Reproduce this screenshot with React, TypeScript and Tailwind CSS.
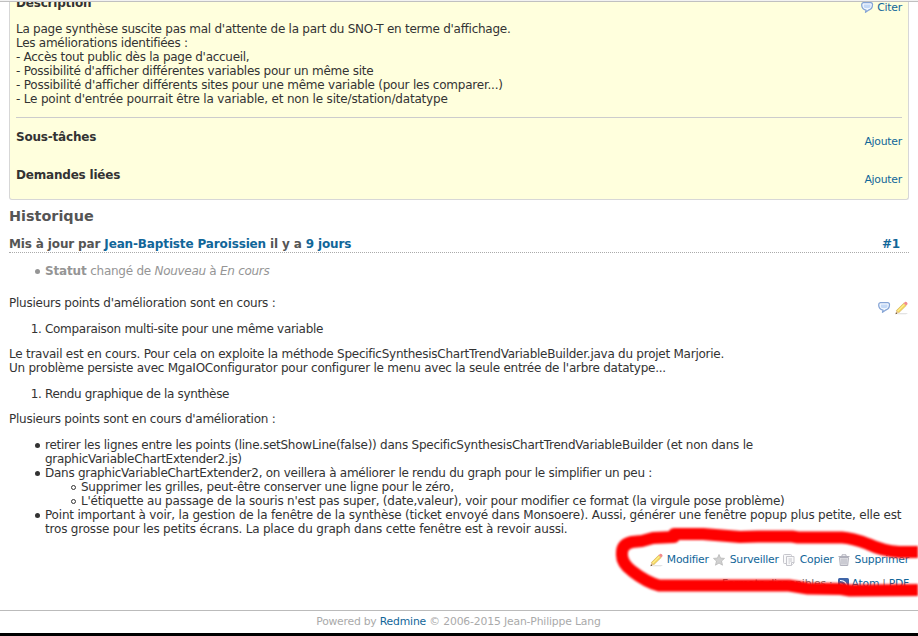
import React from "react";

function Bubble() {
  return (
    <svg width="16" height="16" viewBox="0 0 16 16" className="shrink-0">
      <path d="M4.300 2.600h7.700q1.700.4 1.500 2.200-.1 4.400-3.700 5.200L6.500 12.300l.5-2.200Q2.800 9.200 2.700 5 2.600 2.900 4.300 2.600z" fill="#f4f9ff" stroke="#86a5d6" strokeWidth="1.300" strokeLinejoin="round" />
      <path d="M4.800 4.600h6.700v3q-3.500 1.400-6.700 0z" fill="#c4d9f6" />
    </svg>
  );
}

function Pencil() {
  return (
    <svg width="16" height="16" viewBox="0 0 16 16" className="shrink-0">
      <path d="M4 14.200h9l2-.9H7z" fill="#dadada" />
      <path d="M3.300 10.600L10.700 3.200l2.500 2.300-7.500 7.300z" fill="#f7dc62" stroke="#cda648" strokeWidth=".6" />
      <path d="M4.500 11.200L11.300 4.400" stroke="#fff2a6" strokeWidth="1" />
      <path d="M10.700 3.200l1.500-1.400q2-.2 2.500 2.200l-1.500 1.500z" fill="#f28b8d" />
      <path d="M2.700 14l.6-3.400 2.400 2.200z" fill="#e6c79c" />
      <path d="M2.500 14.200l.5-2 1.500 1.300z" fill="#6b5335" />
    </svg>
  );
}

function Star() {
  return (
    <svg width="16" height="16" viewBox="0 0 16 16" className="shrink-0">
      <path d="M8 2.500l1.500 3.600 4 .3-3 2.600 1 4.200-3.500-2.200-3.500 2.200 1-4.200-3-2.600 4-.3z" fill="#d0d0d0" stroke="#bcbcbc" strokeWidth=".9" />
    </svg>
  );
}

function Copy() {
  return (
    <svg width="16" height="16" viewBox="0 0 16 16" className="shrink-0" fill="#f9f9fa" stroke="#c6c6cc" strokeWidth="1">
      <rect x="2.500" y="2.500" width="8" height="9" rx="1" />
      <path d="M5.500 4.500h7.500v6.500l-2.500 2.500h-5z" />
      <path d="M7.500 7h3.500M7.500 9h3.500M7.500 11h1.500M10.500 13.500v-3H13" />
    </svg>
  );
}

function Trash() {
  return (
    <svg width="16" height="16" viewBox="0 0 16 16" className="shrink-0" fill="none" stroke="#b0b0bb">
      <path d="M3.500 5.500h9l-.8 8H4.300z" fill="#e6e6ea" />
      <path d="M2.500 4.500h11M6 4V2.800h4V4M6 6.500v6M8 6.500v6M10 6.500v6" />
    </svg>
  );
}

function Feed() {
  return (
    <svg width="11" height="12" viewBox="0 0 11 12" className="shrink-0">
      <rect width="11" height="12" rx="1.500" fill="#3f65a8" />
      <path d="M2 2.500q7 0 7 7.500M2 6q3.500 0 3.500 4" fill="none" stroke="#fff" strokeWidth="1.200" />
    </svg>
  );
}

function Item({ hollow, children }: { hollow?: boolean; children: React.ReactNode }) {
  return (
    <li className="-ml-[10px] flex">
      <span className={`mt-[5px] shrink-0 rounded-full ${hollow ? "mr-[5px] h-[5px] w-[5px] border border-current" : "mr-[5.500px] h-[4.500px] w-[4.500px] bg-current"}`} />
      <div>{children}</div>
    </li>
  );
}

const link = "text-[#169]";
const small = "text-[10.8px] leading-[14px] tracking-[-0.22px]";

export default function App() {
  return (
    <div className="relative h-[636px] w-[918px] overflow-hidden bg-white font-['DejaVu_Sans',sans-serif] text-[12px] leading-[14px] tracking-[-0.245px] whitespace-nowrap text-[#333]">
      <div className="h-[2px] border-b border-[#c0c0c0] bg-[#f2f2f2]" />
      <section className="mx-[9px] h-[198px] overflow-hidden rounded-b-[3px] border border-t-0 border-[#d7d7d7] bg-[#ffffdd] px-[6px]">
        <div className="flex h-[20px] justify-between">
          <b className="-mt-[6px] block tracking-[-0.2px]">Description</b>
          <span className={`-mt-[2px] flex h-[16px] items-center ${small} ${link}`}>
            <Bubble />
            <a className="ml-[2px]">Citer</a>
          </span>
        </div>
        <p>
          <span className="tracking-[-0.255px]">La page synthèse suscite pas mal d'attente de la part du SNO-T en terme d'affichage.</span><br />
          <span className="tracking-[-0.27px]">Les améliorations identifiées :</span><br />
          <span className="tracking-[-0.28px]">- Accès tout public dès la page d'accueil,</span><br />
          - Possibilité d'afficher différentes variables pour un même site<br />
          <span className="tracking-[-0.225px]">- Possibilité d'afficher différents sites pour une même variable (pour les comparer...)</span><br />
          <span className="tracking-[-0.18px]">- Le point d'entrée pourrait être la variable, et non le site/station/datatype</span>
        </p>
        <hr className="mt-[11px] border-[#cccccc]" />
        <div className="mt-[12px] flex h-[38px] justify-between">
          <b className="tracking-[-0.2px]">Sous-tâches</b>
          <a className={`mt-[5px] ${small} ${link}`}>Ajouter</a>
        </div>
        <div className="flex justify-between">
          <b className="tracking-[-0.2px]">Demandes liées</b>
          <a className={`mt-[5px] ${small} ${link}`}>Ajouter</a>
        </div>
      </section>
      <main className="px-[9px]">
        <h3 className="mt-[8px] text-[14.4px] leading-[16px] font-bold tracking-normal text-[#555]">Historique</h3>
        <h4 className="mt-[12px] flex h-[17px] justify-between border-b border-dotted border-[#aaa] pr-[9px] leading-[16px] font-bold tracking-[-0.14px] text-[#555]">
          <span>Mis à jour par <a className={link}>Jean-Baptiste Paroissien</a> il y a <a className={link}>9 jours</a></span>
          <a className={link}>#1</a>
        </h4>
        <ul className="mt-[11px] pl-[36px] text-[#959595]">
          <Item><b className="tracking-[-0.15px]">Statut</b> changé de <i className="tracking-[-0.3px]">Nouveau</i> à <i className="tracking-[-0.3px]">En cours</i></Item>
        </ul>
        <div className="mt-[18px] flex h-[26px] justify-between">
          <p>Plusieurs points d'amélioration sont en cours :</p>
          <span className="mt-[4px] flex gap-[1px]"><Bubble /><Pencil /></span>
        </div>
        <ol className="list-decimal pl-[36px] tracking-[-0.3px]"><li>Comparaison multi-site pour une même variable</li></ol>
        <p className="mt-[11px]">
          <span className="tracking-[-0.25px]">Le travail est en cours. Pour cela on exploite la méthode SpecificSynthesisChartTrendVariableBuilder.java du projet Marjorie.</span><br />
          <span className="tracking-[-0.24px]">Un problème persiste avec MgaIOConfigurator pour configurer le menu avec la seule entrée de l'arbre datatype...</span>
        </p>
        <ol className="mt-[12px] list-decimal pl-[36px] tracking-[-0.34px]"><li>Rendu graphique de la synthèse</li></ol>
        <p className="mt-[11px]">Plusieurs points sont en cours d'amélioration :</p>
        <ul className="mt-[12px] pl-[36px]">
          <Item>retirer les lignes entre les points (line.setShowLine(false)) dans SpecificSynthesisChartTrendVariableBuilder (et non dans le<br /><span className="tracking-[-0.3px]">graphicVariableChartExtender2.js)</span></Item>
          <Item>
            <span className="tracking-[-0.27px]">Dans graphicVariableChartExtender2, on veillera à améliorer le rendu du graph pour le simplifier un peu :</span>
            <ul className="pl-[36px]">
              <Item hollow>Supprimer les grilles, peut-être conserver une ligne pour le zéro,</Item>
              <Item hollow><span className="tracking-[-0.218px]">L'étiquette au passage de la souris n'est pas super, (date,valeur), voir pour modifier ce format (la virgule pose problème)</span></Item>
            </ul>
          </Item>
          <Item><span className="tracking-[-0.197px]">Point important à voir, la gestion de la fenêtre de la synthèse (ticket envoyé dans Monsoere). Aussi, générer une fenêtre popup plus petite, elle est<br />tros grosse pour les petits écrans. La place du graph dans cette fenêtre est à revoir aussi.</span></Item>
        </ul>
        <div className={`mt-[16px] flex h-[16px] items-center justify-end gap-[2px] ${small} ${link}`}>
          <span className="flex items-center gap-[3px]"><Pencil /><a>Modifier</a></span>
          <span className="flex items-center gap-[3px]"><Star /><a>Surveiller</a></span>
          <span className="flex items-center gap-[3px]"><Copy /><a>Copier</a></span>
          <span className="flex items-center gap-[3px]"><Trash /><a>Supprimer</a></span>
        </div>
        <div className={`mt-[9px] flex h-[14px] items-center justify-end ${small} text-[#707070]`}>
          <span>Formats disponibles :</span>
          <span className="ml-[5px]"><Feed /></span>
          <a className={`ml-[3px] ${link}`}>Atom</a><span className="px-[3px]">|</span><a className={link}>PDF</a>
        </div>
      </main>
      <footer className="mt-[19px] h-[23px] border-t border-[#bbb] pt-[4px] pr-[1px] text-center text-[10.8px] leading-[14px] tracking-[-0.16px] text-[#aaa]">
        <span className="tracking-[-0.24px]">Powered by </span><a className={link}>Redmine</a> © 2006-2015 Jean-Philippe Lang
      </footer>
      <div className="h-[4px] bg-black" />
      <svg className="absolute top-0 left-0 blur-[0.8px]" width="918" height="636" viewBox="0 0 918 636" fill="none" stroke="#ff0000" strokeWidth="12" strokeLinecap="round" strokeLinejoin="round">
        <path d="M930 552H899Q883 551 868 544Q852 538 842 537.500H798L792 536.500H758L740 537L703 534H674L674 537L653 538L642 541L632 542Q622 544 622 553Q621 563 632 571Q646 582 659 585.500H789L808 588.500L841 589L850 590.500L930 590" />
      </svg>
    </div>
  );
}
